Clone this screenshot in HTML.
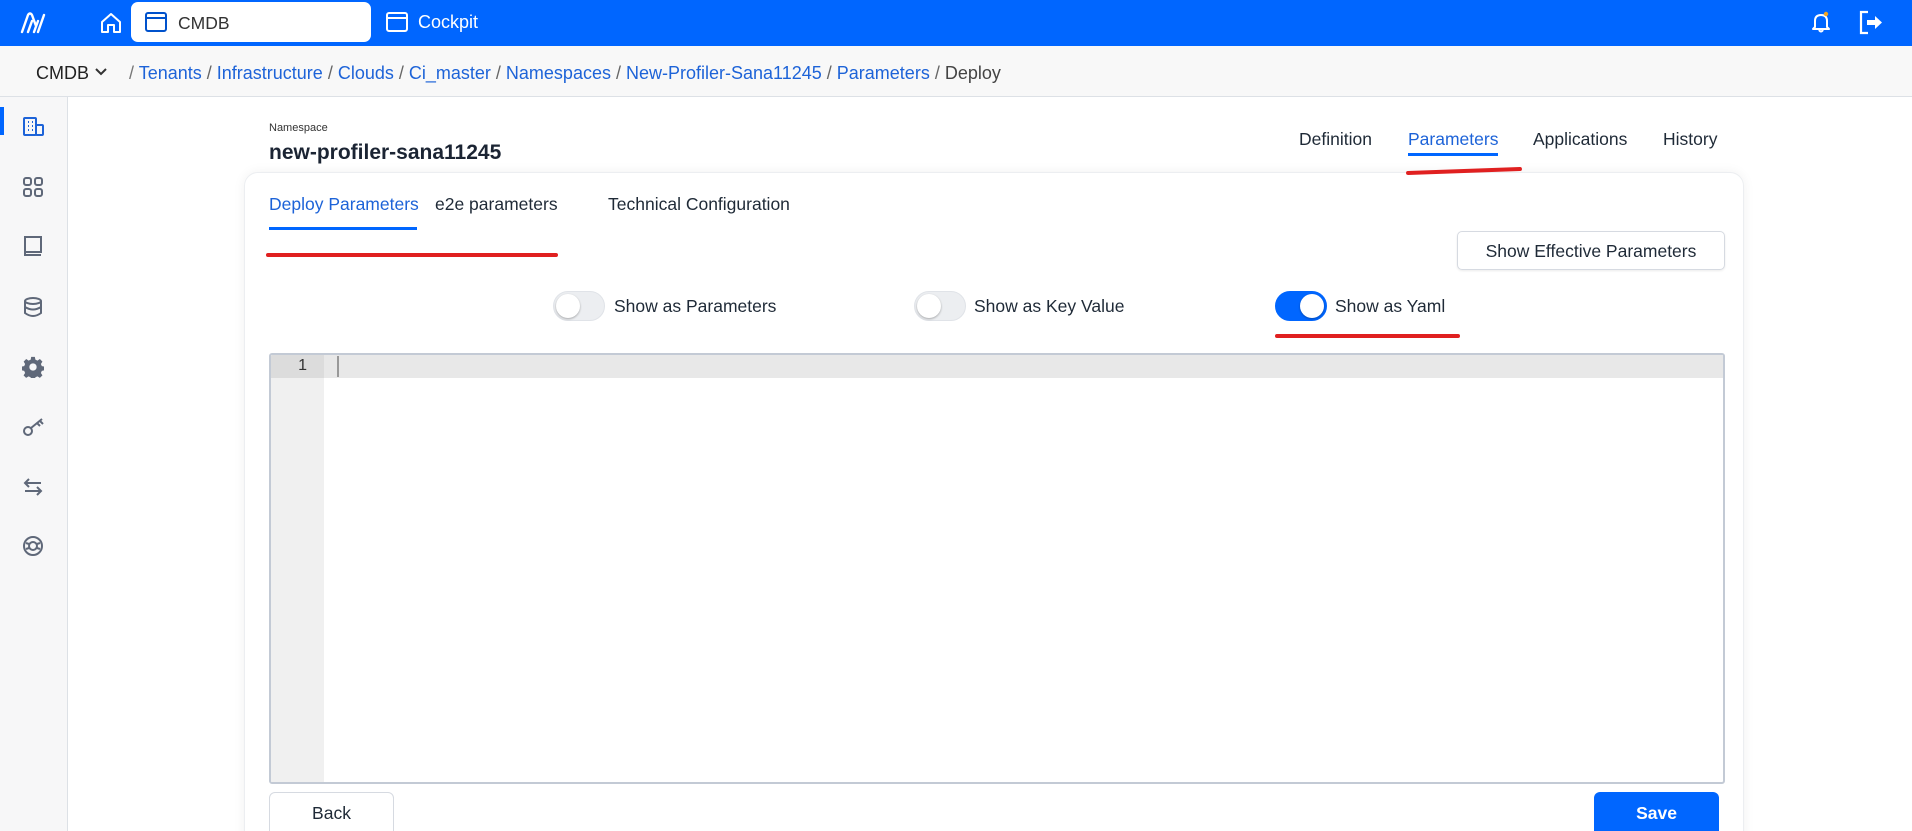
<!DOCTYPE html>
<html><head><meta charset="utf-8"><style>
*{box-sizing:border-box;margin:0;padding:0}
html,body{width:1912px;height:831px;overflow:hidden}
body{font-family:"Liberation Sans",sans-serif;background:#fff;position:relative;color:#1f2a37}
#w{position:absolute;left:0;top:0;width:1912px;height:831px;overflow:hidden}
.a{position:absolute}
.top{left:0;top:0;width:1912px;height:46px;background:#0066ff}
.bc{left:0;top:46px;width:1912px;height:51px;background:#f8f8f8;border-bottom:1px solid #dde1e6}
.side{left:0;top:97px;width:68px;height:734px;background:#f7f7f8;border-right:1px solid #dde1e6}
.t{font-size:17.5px;white-space:nowrap}
.lnk{color:#1d63d8}
.card{left:244px;top:172px;width:1500px;height:700px;background:#fff;border:1px solid #eceef1;border-radius:14px;box-shadow:0 0 12px rgba(0,0,0,.06)}
.tg{width:52px;height:30px;border-radius:15px;background:#eceef1;border:1px solid #e0e3e8}
.tg i{position:absolute;left:2px;top:2px;width:24px;height:24px;border-radius:50%;background:#fff;box-shadow:0 1px 2px rgba(0,0,0,.3)}
.red{height:4px;background:#e02020;border-radius:2px}
svg{position:absolute}
</style></head><body><div id="w">
<div class="a top"></div>
<svg style="left:20px;top:12px" width="28" height="22" viewBox="0 0 28 22"><path d="M2 20 L8 3 Q10 0 12 3 L16 14 M8 20 L12 9 M14 20 L18 9 M18 20 L24 3" stroke="#fff" stroke-width="2.4" fill="none" stroke-linecap="round"/></svg>
<svg style="left:99px;top:11px" width="24" height="24" viewBox="0 0 24 24"><path d="M3 11 L12 3 L21 11 V21 H15 V14 H9 V21 H3 Z" stroke="#fff" stroke-width="2" fill="none" stroke-linejoin="round"/></svg>
<div class="a" style="left:131px;top:2px;width:240px;height:40px;background:#fff;border-radius:7px"></div>
<svg style="left:145px;top:12px" width="22" height="20" viewBox="0 0 22 20"><rect x="1" y="1" width="20" height="18" rx="2" stroke="#0052cc" stroke-width="2" fill="none"/><path d="M1 6 H21" stroke="#0052cc" stroke-width="2"/></svg>
<div class="a t" style="left:178px;top:13px;color:#333">CMDB</div>
<svg style="left:386px;top:12px" width="22" height="20" viewBox="0 0 22 20"><rect x="1" y="1" width="20" height="18" rx="2" stroke="#fff" stroke-width="2" fill="none"/><path d="M1 6 H21" stroke="#fff" stroke-width="2"/></svg>
<div class="a t" style="left:418px;top:12px;color:#fff;font-size:18px">Cockpit</div>
<svg style="left:1809px;top:10px" width="24" height="24" viewBox="0 0 24 24"><path d="M6 17 V11 Q6 5 12 5 Q18 5 18 11 V17 L20 19 H4 Z M10 20 Q12 23 14 20" stroke="#fff" stroke-width="2" fill="none" stroke-linejoin="round"/><circle cx="17" cy="4" r="2.2" fill="#f5a623"/></svg>
<svg style="left:1858px;top:10px" width="26" height="25" viewBox="0 0 26 25"><path d="M10 2 H3 V23 H10" stroke="#fff" stroke-width="2.2" fill="none"/><path d="M9 10 H17 V6 L24 12.5 L17 19 V15 H9 Z" fill="#fff"/></svg>

<div class="a bc"></div>
<div class="a t" style="left:36px;top:63px;color:#222;font-size:18px">CMDB</div>
<svg style="left:94px;top:67px" width="14" height="10" viewBox="0 0 14 10"><path d="M2 2 L7 7 L12 2" stroke="#333" stroke-width="2" fill="none"/></svg>
<div class="a t" style="left:129px;top:63px;color:#666;font-size:18px"><span style="color:#777">/</span> <span class="lnk">Tenants</span> / <span class="lnk">Infrastructure</span> / <span class="lnk">Clouds</span> / <span class="lnk">Ci_master</span> / <span class="lnk">Namespaces</span> / <span class="lnk">New-Profiler-Sana11245</span> / <span class="lnk">Parameters</span> / <span style="color:#444">Deploy</span></div>

<div class="a side"></div>
<div class="a" style="left:0;top:107px;width:4px;height:28px;background:#0066ff"></div>
<svg style="left:22px;top:116px" width="24" height="22" viewBox="0 0 24 22"><rect x="2" y="2" width="12" height="17" rx="1" stroke="#1d63d8" stroke-width="2" fill="none"/><rect x="14" y="9" width="7" height="10" rx="1" stroke="#1d63d8" stroke-width="2" fill="none"/><path d="M6 6h1M10 6h1M6 10h1M10 10h1M6 14h1M10 14h1" stroke="#1d63d8" stroke-width="2"/></svg>
<svg style="left:22px;top:176px" width="22" height="22" viewBox="0 0 22 22" fill="none" stroke="#5f6879" stroke-width="2"><rect x="2" y="2" width="7" height="7" rx="2"/><rect x="13" y="2" width="7" height="7" rx="2"/><rect x="2" y="13" width="7" height="7" rx="2"/><rect x="13" y="13" width="7" height="7" rx="2"/></svg>
<svg style="left:22px;top:235px" width="22" height="22" viewBox="0 0 22 22" fill="none" stroke="#5f6879" stroke-width="2"><path d="M3 2 H19 V17 H3 Z M3 17 V20 H19"/></svg>
<svg style="left:22px;top:296px" width="22" height="22" viewBox="0 0 22 22" fill="none" stroke="#5f6879" stroke-width="2"><ellipse cx="11" cy="5" rx="8" ry="3"/><path d="M3 5 V17 Q11 23 19 17 V5 M3 11 Q11 16 19 11"/></svg>
<svg style="left:22px;top:356px" width="22" height="22" viewBox="0 0 24 24"><path fill="#5f6879" d="M10 1h4l.6 3 2.3 1 2.6-1.7 2.8 2.8-1.7 2.6 1 2.3 3 .6v4l-3 .6-1 2.3 1.7 2.6-2.8 2.8-2.6-1.7-2.3 1-.6 3h-4l-.6-3-2.3-1-2.6 1.7-2.8-2.8 1.7-2.6-1-2.3-3-.6v-4l3-.6 1-2.3L1.8 6.1 4.6 3.3l2.6 1.7 2.3-1zM12 8a4 4 0 100 8 4 4 0 000-8z"/></svg>
<svg style="left:22px;top:416px" width="24" height="22" viewBox="0 0 24 22" fill="none" stroke="#5f6879" stroke-width="2"><circle cx="6" cy="15" r="4"/><path d="M9 12 L20 3 M15 7 L18 10 M18 5 L21 8"/></svg>
<svg style="left:22px;top:476px" width="22" height="22" viewBox="0 0 22 22" fill="none" stroke="#5f6879" stroke-width="2"><path d="M19 7 H3 M7 3 L3 7 L7 11 M3 15 H19 M15 11 L19 15 L15 19"/></svg>
<svg style="left:22px;top:535px" width="22" height="22" viewBox="0 0 22 22" fill="none" stroke="#5f6879" stroke-width="2"><circle cx="11" cy="11" r="9"/><circle cx="11" cy="11" r="4"/><path d="M4 8 L7 9 M15 9 L18 8 M4 14 L7 13 M15 13 L18 14"/></svg>

<div class="a" style="left:269px;top:122px;font-size:11px;color:#333">Namespace</div>
<div class="a" style="left:269px;top:141px;font-size:21px;font-weight:bold;color:#1b2433">new-profiler-sana11245</div>
<div class="a t" style="left:1299px;top:129px">Definition</div>
<div class="a t" style="left:1408px;top:129px;color:#1d63d8">Parameters</div>
<div class="a" style="left:1408px;top:153px;width:90px;height:3px;background:#0066ff"></div>
<div class="a t" style="left:1533px;top:129px">Applications</div>
<div class="a t" style="left:1663px;top:129px">History</div>

<div class="a card"></div>
<div class="a red" style="left:1406px;top:169px;width:116px;transform:rotate(-2deg)"></div>
<div class="a t" style="left:269px;top:194px;color:#1d63d8">Deploy Parameters</div>
<div class="a" style="left:269px;top:227px;width:148px;height:3px;background:#0066ff"></div>
<div class="a t" style="left:435px;top:194px">e2e parameters</div>
<div class="a t" style="left:608px;top:194px">Technical Configuration</div>
<div class="a red" style="left:266px;top:253px;width:292px"></div>
<div class="a" style="left:1457px;top:231px;width:268px;height:39px;border:1px solid #d6dae1;border-radius:5px;box-shadow:0 1px 2px rgba(0,0,0,.08)"></div>
<div class="a t" style="left:1457px;top:241px;width:268px;text-align:center">Show Effective Parameters</div>

<div class="a tg" style="left:553px;top:291px"><i></i></div>
<div class="a t" style="left:614px;top:296px">Show as Parameters</div>
<div class="a tg" style="left:914px;top:291px"><i></i></div>
<div class="a t" style="left:974px;top:296px">Show as Key Value</div>
<div class="a tg" style="left:1275px;top:291px;background:#0066ff;border-color:#0066ff"><i style="left:24px"></i></div>
<div class="a t" style="left:1335px;top:296px">Show as Yaml</div>
<div class="a red" style="left:1275px;top:334px;width:185px"></div>

<div class="a" style="left:269px;top:353px;width:1456px;height:431px;border:2px solid #c3cad5;border-radius:3px;background:#fff;overflow:hidden">
<div class="a" style="left:0;top:0;width:1454px;height:23px;background:#e8e8e8"></div>
<div class="a" style="left:0;top:0;width:53px;height:431px;background:#f0f0f0"></div>
<div class="a" style="left:0;top:0;width:53px;height:23px;background:#dcdcdc"></div>
<div class="a" style="left:0;top:2px;width:36px;text-align:right;font-size:16px;color:#333">1</div>
<div class="a" style="left:66px;top:1px;width:2px;height:21px;background:#999"></div>
</div>
<div class="a" style="left:269px;top:792px;width:125px;height:45px;border:1px solid #d6dae1;border-radius:6px"></div>
<div class="a t" style="left:269px;top:803px;width:125px;text-align:center">Back</div>
<div class="a" style="left:1594px;top:792px;width:125px;height:45px;background:#0066ff;border-radius:6px"></div>
<div class="a t" style="left:1594px;top:803px;width:125px;text-align:center;color:#fff;font-weight:bold">Save</div>
</div></body></html>
